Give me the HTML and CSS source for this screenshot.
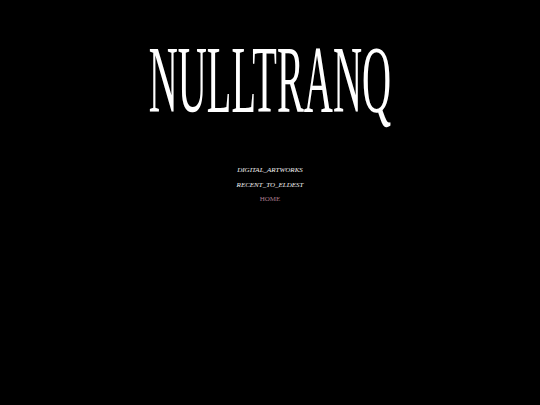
FILE: index.html
```html
<!DOCTYPE html>
<html>
<head>
<meta charset="utf-8">
<link rel="stylesheet" href="styles.css">
</head>
<body>
<div class="page">
  <h1 class="title"><span class="title-text">NULLTRANQ</span></h1>
  <nav class="nav">
    <a class="nav-link" href="#">DIGITAL_ARTWORKS</a>
    <a class="nav-link" href="#">RECENT_TO_ELDEST</a>
    <a class="nav-link home" href="#">HOME</a>
  </nav>
</div>
</body>
</html>
```
FILE: styles.css
```css
html, body {
  margin: 0;
  padding: 0;
  background: #000;
  height: 100%;
}
.page {
  display: flex;
  flex-direction: column;
  align-items: center;
  font-family: "Liberation Serif", "Times New Roman", serif;
  color: #fff;
  padding-top: 33px;
}
.title {
  margin: 0;
  font-size: 95px;
  font-weight: normal;
  line-height: 95px;
  height: 95px;
  display: flex;
  justify-content: center;
  width: 100%;
}
.title-text {
  display: inline-block;
  transform: scaleX(0.424);
  white-space: nowrap;
}
.nav {
  margin-top: 35px;
  display: flex;
  flex-direction: column;
  align-items: center;
}
.nav-link {
  font-size: 7px;
  line-height: 14.5px;
  color: #f2f2f2;
  font-style: italic;
  text-decoration: none;
}
.nav-link.home {
  font-style: normal;
  color: #a87a8c;
}
```
